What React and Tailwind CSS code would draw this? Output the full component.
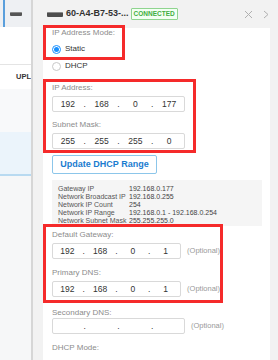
import React from 'react';

function Radio({ checked, label }) {
  return (
    <div className="flex items-center h-[12px] gap-[4px]">
      {checked ? (
        <span className="w-[9px] h-[9px] rounded-full border border-[#1890ff] flex items-center justify-center bg-white">
          <span className="w-[5px] h-[5px] rounded-full bg-[#1890ff]" />
        </span>
      ) : (
        <span className="w-[9px] h-[9px] rounded-full border border-[#c8c8c8] bg-white" />
      )}
      <span className="text-[8px] leading-[10px] text-[#333]">{label}</span>
    </div>
  );
}

function Label({ children, className = '' }) {
  return <div className={`h-[10px] text-[8px] leading-[10px] text-[#8c8c8c] ${className}`}>{children}</div>;
}

function IpInput({ parts = ['', '', '', ''], className = '' }) {
  return (
    <div className={`w-[133px] h-[16px] border border-[#d9d9d9] rounded-[2px] bg-white flex items-center text-[8.5px] text-[#333] ${className}`}>
      {parts.map((p, i) => (
        <React.Fragment key={i}>
          {i > 0 && <span className="w-[4px] text-center">.</span>}
          <span className="flex-1 text-center">{p}</span>
        </React.Fragment>
      ))}
    </div>
  );
}

function Optional() {
  return <span className="ml-[6px] text-[7.5px] text-[#999]">(Optional)</span>;
}

const info = [
  ['Gateway IP', '192.168.0.177'],
  ['Network Broadcast IP', '192.168.0.255'],
  ['Network IP Count', '254'],
  ['Network IP Range', '192.168.0.1 - 192.168.0.254'],
  ['Network Subnet Mask', '255.255.255.0'],
];

export default function App() {
  return (
    <div className="flex h-[360px] w-[278px] overflow-hidden bg-white font-['Liberation_Sans',Arial,sans-serif]">
      {/* dimmed page behind the drawer */}
      <div className="w-[31px] shrink-0 flex flex-col overflow-hidden">
        <div className="h-[27px] bg-[#eef0f3] flex items-center">
          <div className="w-[2px] self-stretch ml-[3px] bg-[#5a9fdc]" />
          <div className="ml-[5px] w-[12px] h-[4px] rounded-[1px] bg-[#555] border-t border-[#888]" />
        </div>
        <div className="h-[38px] bg-white border-b border-[#e4e4e4]" />
        <div className="h-[24px] bg-white flex items-center pl-[16px] text-[7.5px] font-bold text-[#333] whitespace-nowrap">UPL</div>
        <div className="h-[43px] bg-[#f8f9fa]" />
        <div className="h-[44px] bg-[#ebf4fb] border-b-2 border-[#b8daf1]" />
        <div className="flex-1 bg-[#f6f7f8]" />
      </div>

      {/* drawer */}
      <div className="flex-1 flex flex-col border-l-2 border-[#d6d6d6] bg-[#f2f2f2]">
        <div className="h-[28px] shrink-0 flex items-center pl-[14px] pr-[9px]">
          <div className="w-[16px] h-[5px] rounded-[1px] bg-[#4d4d4d] border-t border-[#8a8a8a]" />
          <span className="ml-[3px] text-[9px] font-bold text-[#333] whitespace-nowrap">60-A4-B7-53-...</span>
          <span className="ml-[2px] h-[12px] px-[2px] border border-[#8fd48f] rounded-[1px] bg-[#f3fff3] text-[6.5px] leading-[10px] font-bold text-[#3fae3f]">CONNECTED</span>
          <svg className="ml-auto" width="9" height="9" viewBox="0 0 9 9">
            <path d="M1 1L8 8M8 1L1 8" stroke="#b0b0b0" strokeWidth="1" />
          </svg>
          <svg className="ml-[10px]" width="6" height="9" viewBox="0 0 6 9">
            <path d="M1 1L5 4.5L1 8" stroke="#b0b0b0" strokeWidth="1" fill="none" />
          </svg>
        </div>

        <div className="flex-1 flex pl-[10px] pr-[8px]">
          <div className="flex-1 bg-white flex flex-col">
            <div className="-mt-[3px] w-[82px] border-[3px] border-[#f52a2a] pl-[6px] pb-[2px]">
              <Label>IP Address Mode:</Label>
              <div className="mt-[5px]">
                <Radio checked label="Static" />
              </div>
            </div>
            <div className="pl-[9px]">
              <Radio label="DHCP" />
            </div>

            <div className="mt-[7px] w-[153px] border-[3px] border-[#f52a2a] pl-[6px] pt-[1px] pb-[1px]">
              <Label>IP Address:</Label>
              <IpInput className="mt-[3px]" parts={['192', '168', '0', '177']} />
              <Label className="mt-[8px]">Subnet Mask:</Label>
              <IpInput className="mt-[3px]" parts={['255', '255', '255', '0']} />
            </div>

            <button className="mt-[2px] ml-[9px] w-[105px] h-[19px] border border-[#8cc6ea] rounded-[2px] bg-white text-[9px] font-bold text-[#1a7ccf]">
              Update DHCP Range
            </button>

            <div className="mt-[6px] ml-[9px] mr-[8px] h-[46px] bg-[#f5f5f5] px-[6px] pt-[5px] text-[7px] leading-[8px] text-[#555]">
              {info.map(([k, v]) => (
                <div key={k} className="flex">
                  <span className="w-[71px] shrink-0">{k}</span>
                  <span className="text-[#444]">{v}</span>
                </div>
              ))}
            </div>

            <div className="-mt-[2px] w-[180px] border-[3px] border-[#f52a2a] pl-[6px] pt-[3px] pb-[3px]">
              <Label>Default Gateway:</Label>
              <div className="mt-[3px] flex items-center">
                <IpInput parts={['192', '168', '0', '1']} />
                <Optional />
              </div>
              <Label className="mt-[9px]">Primary DNS:</Label>
              <div className="mt-[3px] flex items-center">
                <IpInput parts={['192', '168', '0', '1']} />
                <Optional />
              </div>
            </div>

            <div className="pl-[9px]">
              <Label className="mt-[5px]">Secondary DNS:</Label>
              <div className="mt-[0px] flex items-center">
                <IpInput />
                <Optional />
              </div>
              <Label className="mt-[9px]">DHCP Mode:</Label>
            </div>
          </div>
        </div>
      </div>
    </div>
  );
}
